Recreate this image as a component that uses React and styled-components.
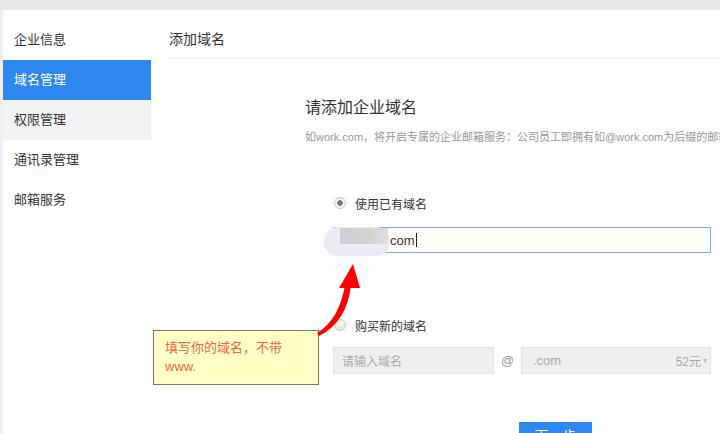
import React from 'react';
import styled, { createGlobalStyle } from 'styled-components';

const GlobalStyle = createGlobalStyle`
  html, body {
    margin: 0;
    padding: 0;
    background: #fdfdfd;
    overflow: hidden;
  }
  * {
    box-sizing: border-box;
  }
  body {
    font-family: 'Liberation Sans', 'Noto Sans CJK SC', sans-serif;
  }
`;

const menu = [
  { label: '企业信息' },
  { label: '域名管理', state: 'active' },
  { label: '权限管理', state: 'hover' },
  { label: '通讯录管理' },
  { label: '邮箱服务' },
];

const App = () => {
  return (
    <Page>
      <GlobalStyle />
      <TopStrip />
      <Frame>
        <Sidebar>
          {menu.map((item) => (
            <NavItem key={item.label} state={item.state}>
              {item.label}
            </NavItem>
          ))}
        </Sidebar>
        <Content>
          <Header>添加域名</Header>
          <Body>
            <Title>请添加企业域名</Title>
            <Sub>如work.com，将开启专属的企业邮箱服务：公司员工即拥有如@work.com为后缀的邮箱地址</Sub>
            <Options>
              <RadioRow style={{ marginTop: 48 }}>
                <Radio checked />
                <RadioLabel>使用已有域名</RadioLabel>
              </RadioRow>
              <InputWrap>
                <Field>
                  com<Caret />
                </Field>
                <Redact>
                  <RedactBar />
                </Redact>
              </InputWrap>
              <RadioRow style={{ marginTop: 62 }}>
                <Radio />
                <RadioLabel>购买新的域名</RadioLabel>
              </RadioRow>
              <BuyRow>
                <DomainInput>请输入域名</DomainInput>
                <At>@</At>
                <Select>
                  <span>.com</span>
                  <Price>
                    52元<Arrow>▾</Arrow>
                  </Price>
                </Select>
              </BuyRow>
              <NextButton>下一步</NextButton>
            </Options>
          </Body>
        </Content>
      </Frame>

      <Tip>
        填写你的域名，不带
        <br />
        www.
      </Tip>
      <Pointer width="55" height="80" viewBox="0 0 55 80">
        <path d="M7 75 Q29 62 35 27 L41 27 Q37 64 9 78 Z" fill="#f00" />
        <polygon points="43,6 29,30 50,30" fill="#f00" />
      </Pointer>
    </Page>
  );
};

const Page = styled.div`
  position: relative;
  width: 720px;
  height: 433px;
  overflow: hidden;
  background: #fdfdfd;
`;

const TopStrip = styled.div`
  height: 10px;
  background: #e7e8ea;
`;

const Frame = styled.div`
  display: flex;
  height: 423px;
  border-left: 3px solid #efefef;
`;

const Sidebar = styled.div`
  width: 148px;
  flex-shrink: 0;
  padding-top: 10px;
`;

const NavItem = styled.div`
  height: 40px;
  display: flex;
  align-items: center;
  padding: 0 0 3px 11px;
  font-size: 13px;
  color: ${(props) => (props.state === 'active' ? '#fff' : '#333')};
  background: ${(props) =>
    props.state === 'active' ? '#2d87ef' : props.state === 'hover' ? '#f2f2f2' : 'transparent'};
`;

const Content = styled.div`
  flex: 1;
  min-width: 0;
  overflow: hidden;
`;

const Header = styled.div`
  height: 49px;
  margin-left: 16px;
  padding: 7px 0 0 2px;
  display: flex;
  align-items: center;
  font-size: 14px;
  color: #333;
  border-bottom: 1px solid #f1f1f1;
`;

const Body = styled.div`
  padding-left: 154px;
  padding-top: 38px;
`;

const Title = styled.div`
  font-size: 16px;
  line-height: 22px;
  color: #333;
`;

const Sub = styled.div`
  margin-top: 10px;
  font-size: 11px;
  line-height: 16px;
  color: #999;
  white-space: nowrap;
`;

const Options = styled.div`
  margin-left: 28px;
  width: 378px;
`;

const RadioRow = styled.div`
  height: 20px;
  display: flex;
  align-items: center;
  padding-left: 1px;
`;

const Radio = styled.span`
  width: 12px;
  height: 12px;
  border-radius: 50%;
  border: 1px solid #c9c9c9;
  background: ${(props) =>
    props.checked ? 'radial-gradient(circle, #777 0 2.5px, #f4f4f4 3px)' : 'linear-gradient(#fafafa, #e6e6e6)'};
`;

const RadioLabel = styled.span`
  margin-left: 9px;
  font-size: 12px;
  color: #333;
`;

const InputWrap = styled.div`
  position: relative;
  margin-top: 14px;
`;

const Field = styled.div`
  height: 26px;
  border: 1px solid #7eabea;
  padding-left: 56px;
  display: flex;
  align-items: center;
  font-size: 13px;
  color: #333;
  background: #fff;
`;

const Caret = styled.span`
  display: inline-block;
  width: 1px;
  height: 14px;
  margin-left: 1px;
  background: #222;
`;

const Redact = styled.div`
  position: absolute;
  left: -9px;
  top: 0;
  width: 66px;
  height: 29px;
  border-radius: 14px;
  background: #e9edf3;
  padding: 1px 0 0 16px;
`;

const RedactBar = styled.div`
  width: 48px;
  height: 16px;
  background: linear-gradient(90deg, #cfcfcf 0%, #d2d2d2 60%, #dedede 100%);
`;

const BuyRow = styled.div`
  display: flex;
  align-items: center;
  height: 27px;
  margin-top: 12px;
`;

const DomainInput = styled.div`
  width: 161px;
  height: 27px;
  display: flex;
  align-items: center;
  padding-left: 8px;
  background: #efefef;
  border: 1px solid #e3e3e3;
  font-size: 12px;
  color: #aaa;
`;

const At = styled.div`
  width: 27px;
  text-align: center;
  font-size: 13px;
  color: #999;
`;

const Select = styled.div`
  flex: 1;
  height: 27px;
  display: flex;
  align-items: center;
  justify-content: space-between;
  padding: 0 3px 0 11px;
  background: #efefef;
  border: 1px solid #e3e3e3;
  font-size: 13px;
  color: #aaa;
`;

const Price = styled.span`
  font-size: 12px;
  display: flex;
  align-items: center;
`;

const Arrow = styled.span`
  font-size: 8px;
  margin-left: 2px;
  color: #bbb;
`;

const NextButton = styled.button`
  display: block;
  margin: 48px 0 0 186px;
  width: 73px;
  height: 30px;
  padding: 0 0 4px;
  border: none;
  background: #2d87ef;
  color: #fff;
  font-family: 'Liberation Sans', 'Noto Sans CJK SC', sans-serif;
  font-size: 14px;
`;

const Tip = styled.div`
  position: absolute;
  left: 153px;
  top: 330px;
  width: 166px;
  height: 55px;
  padding: 7px 0 0 11px;
  background: #ffffc6;
  border: 1px solid #737c5c;
  font-size: 13px;
  line-height: 19px;
  color: #ef6448;
`;

const Pointer = styled.svg`
  position: absolute;
  left: 310px;
  top: 258px;
`;

export default App;
